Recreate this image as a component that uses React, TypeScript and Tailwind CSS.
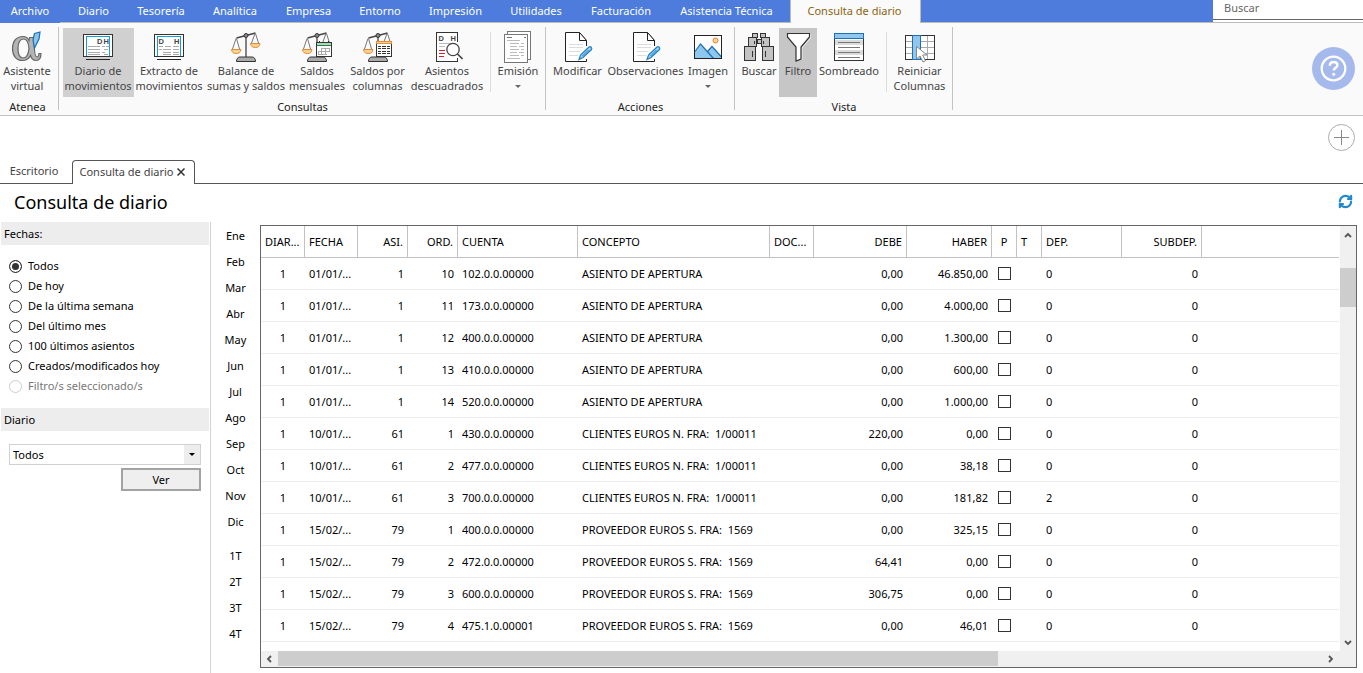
import React from "react";
import { RefreshCw } from "lucide-react";

type IconProps = { children: React.ReactNode };

function Icon({ children }: IconProps) {
  return (
    <svg viewBox="0 0 32 32" className="h-8 w-8 shrink-0" fill="none" aria-hidden="true">
      {children}
    </svg>
  );
}

function AlphaIcon() {
  const bowl =
    "M12 5.500C5 5.500 1.500 10.500 1.500 17.500C1.500 24.500 5 29.500 11.500 29.500C15.500 29.500 18 27.500 19.500 24.500C20.500 28 22.500 29.500 25 29.500C28 29.500 30 27 30 22.500L28 22.500C27.800 25 27 26 26 26C23.500 26 23 18 23 6.500H18.500L18 9.500C16.800 7 15 5.500 12 5.500Z";
  const counter = "M12.500 8C15.500 8 17.500 12 18 17.500C17.500 23 15.500 27 12 27C8.500 27 7 23.500 7 17.500C7 11.500 9 8 12.500 8Z";
  return (
    <Icon>
      <path d={`${bowl} ${counter}`} fill="#b4b4b4" fillRule="evenodd" stroke="#666" strokeWidth="1.200" />
      <path d="M23.500 2.500 L29 1 L28 8 L23.500 17 L22 9 Z" fill="#8cc4ec" stroke="#1c6fb4" strokeWidth="1.200" />
    </Icon>
  );
}

function LedgerIcon({ split }: { split?: boolean }) {
  return (
    <Icon>
      <g shapeRendering="crispEdges">
        <rect x="1.500" y="3.500" width="29" height="22" fill="#fff" stroke="#333" />
        <path d="M4.500 25V5.500h23V25" stroke="#1a9bd7" />
        {split ? (
          <path d="M6 15.500h4M12 15.500h6M20 15.500h6M6 18.500h3M10 18.500h8M20 18.500h6M10 21.500h8M20 21.500h6M10 23.500h8M20 23.500h6" stroke="#aaa" />
        ) : (
          <path d="M6 15.500h12M20 15.500h3M24 15.500h3M6 18.500h12M22 18.500h4M6 21.500h12M20 21.500h3M6 23.500h12M22 23.500h4" stroke="#aaa" />
        )}
        <path d="M4 28.500h24" stroke="#222" />
      </g>
      <text x={split ? 5.5 : 15} y="13" fontSize="7.500" fontWeight="700" fill="#444" fontFamily="Liberation Sans, sans-serif">D</text>
      <text x={split ? 21 : 21.5} y="13" fontSize="7.500" fontWeight="700" fill="#444" fontFamily="Liberation Sans, sans-serif">H</text>
    </Icon>
  );
}

function ScaleIcon({ overlay }: { overlay?: "calendar" | "columns" }) {
  return (
    <Icon>
      <path d="M6.500 7 L25.500 2" stroke="#444" strokeWidth="1.300" />
      <path d="M6 7.500 L2.500 18M6.500 7.500 L9.500 18" stroke="#777" />
      <path d="M25 2.500 L21.500 12M25.500 2.500 L28.500 12" stroke="#777" />
      <path d="M1.500 18.500h9.500c-.5 3-2 4-4.700 4s-4.300-1-4.800-4z" fill="#fbd28b" stroke="#e08a3c" />
      <path d="M16 5v21" stroke="#333" strokeWidth="1.200" />
      <circle cx="16" cy="4.500" r="2" fill="#888" stroke="#333" />
      <path d="M6.500 30.500c0-3 1.500-4.500 3.500-4.500h12c2 0 3.500 1.500 3.500 4.500z" fill="#aaa" stroke="#333" />
      {!overlay && (
        <path d="M20.500 12.500h9.500c-.5 3-2 4-4.700 4s-4.300-1-4.800-4z" fill="#fbd28b" stroke="#e08a3c" />
      )}
      {overlay === "calendar" && (
        <g shapeRendering="crispEdges">
          <rect x="15.500" y="11.500" width="15" height="14" fill="#fff" stroke="#333" />
          <path d="M16 13h14" stroke="#a9dcb5" strokeWidth="2" />
          <path d="M16 14.500h14" stroke="#2d7a4a" />
          <path d="M18.500 10v2M27.500 10v2" stroke="#333" />
          <path d="M20 17.500h9M17 20.500h12M17 23.500h9M17.500 20v4M20.500 17v7M24.500 17v7M28.500 17v4" stroke="#aaa" />
        </g>
      )}
      {overlay === "columns" && (
        <g shapeRendering="crispEdges">
          <rect x="14.500" y="10.500" width="15" height="15" fill="#fff" stroke="#333" />
          <path d="M14 11.500h16" stroke="#e08a3c" strokeWidth="3" />
          <path d="M15 11.500h14" stroke="#fbd28b" />
          <path d="M16 15.500h3M20 15.500h4M25 15.500h3M16 17.500h3M20 17.500h4M25 17.500h3M16 20.500h3M20 20.500h4M25 20.500h3M16 22.500h3M20 22.500h4M25 22.500h3" stroke="#333" />
        </g>
      )}
    </Icon>
  );
}

function UnbalancedIcon() {
  return (
    <Icon>
      <rect x="5.500" y="1.500" width="21" height="29" fill="#fff" />
      <path d="M26.500 11V1.500H5.500v29h21V27" stroke="#333" shapeRendering="crispEdges" />
      <text x="7.500" y="10" fontSize="7.500" fontWeight="700" fill="#444" fontFamily="Liberation Sans, sans-serif">D</text>
      <text x="19.500" y="10" fontSize="7.500" fontWeight="700" fill="#444" fontFamily="Liberation Sans, sans-serif">H</text>
      <path d="M8 12.500h16M8 15.500h6" stroke="#bbb" shapeRendering="crispEdges" />
      <path d="M8 19.500h6M8 22.500h6M8 25.500h5" stroke="#d8202c" shapeRendering="crispEdges" />
      <circle cx="22" cy="18.500" r="6.200" fill="#fff" stroke="#444" strokeWidth="1.300" />
      <path d="M26.500 23l5 5" stroke="#444" strokeWidth="1.600" />
    </Icon>
  );
}

function PagesIcon() {
  return (
    <Icon>
      <g shapeRendering="crispEdges">
        <rect x="5.500" y="0.500" width="23" height="28" fill="#fff" stroke="#777" />
        <rect x="2.500" y="3.500" width="23" height="28" fill="#fff" stroke="#777" />
        <path d="M5 6.500h5M22 6.500h2" stroke="#777" />
        <path d="M5 9.500h13M8 12.500h9M19 12.500h3M8 15.500h7M17 15.500h5M8 18.500h9M19 18.500h3M8 21.500h7M17 21.500h5M8 24.500h9M19 24.500h3M5 27.500h13" stroke="#bbb" />
      </g>
    </Icon>
  );
}

function EditIcon() {
  return (
    <Icon>
      <path d="M3.500 1.500h14l7 8v21h-21z" fill="#fff" />
      <path d="M24.500 15V9.500l-7-8h-14v29h21V28" stroke="#222" />
      <path d="M17.500 1.500v8h7z" fill="#fff" stroke="#222" />
      <path d="M7 13.500h14M7 16.500h14M7 20.500h11M7 24.500h9" stroke="#ddd" shapeRendering="crispEdges" />
      <path d="M17 28.500l1.500-4.500 8.500-8c1.500-1 3.500.800 2.500 2.500l-8.500 8z" fill="#9fd0f3" stroke="#1f80c4" strokeWidth="1.200" />
      <path d="M20.500 25l6-6" stroke="#1f80c4" />
    </Icon>
  );
}

function ImageIcon() {
  return (
    <Icon>
      <rect x="2.500" y="4.500" width="27" height="23" fill="#fff" />
      <path d="M3 20.500l5.500-7.500 7 7.500 4.500-5 9.500 10.500v1.500H3z" fill="#8fc8ef" />
      <path d="M3 20.500l5.500-7.500 13 14.500M15.500 20.500l4.500-5 9.500 10.500" stroke="#1f6fb2" strokeWidth="1.200" />
      <rect x="2.500" y="4.500" width="27" height="23" stroke="#222" shapeRendering="crispEdges" />
      <circle cx="23.500" cy="9.500" r="2.500" fill="#fbd28b" stroke="#e2803a" />
    </Icon>
  );
}

function BinocularsIcon() {
  return (
    <Icon>
      <g shapeRendering="crispEdges" fill="#c3c3c3" stroke="#333">
        <rect x="9.500" y="2.500" width="5" height="4" />
        <rect x="17.500" y="2.500" width="5" height="4" />
        <path d="M14 8.500h4v4h-4z" />
        <rect x="5.500" y="6.500" width="8" height="9" />
        <rect x="18.500" y="6.500" width="8" height="9" />
        <rect x="1.500" y="15.500" width="11" height="14" />
        <rect x="19.500" y="15.500" width="11" height="14" />
        <path d="M11.500 10v3M20.500 10v3M9.500 20v6M22.500 20v6" />
      </g>
    </Icon>
  );
}

function FunnelIcon() {
  return (
    <Icon>
      <path d="M28.500 3v4l-8.500 10v12" stroke="#eee" />
      <path d="M5.500 2.500h22v3.500l-8.500 10v12l-5 2V16L5.500 6z" fill="#fff" stroke="#333" strokeWidth="1.200" />
    </Icon>
  );
}

function ShadingIcon() {
  return (
    <Icon>
      <g shapeRendering="crispEdges">
        <rect x="1.500" y="2.500" width="29" height="27" fill="#fff" stroke="#333" />
        <path d="M2 11.500h28M2 21.500h28" stroke="#dcdcdc" strokeWidth="5" />
        <rect x="1.500" y="2.500" width="29" height="5" fill="#8fc8ef" stroke="#1f6fb2" />
        <path d="M5 11.500h22M5 16.500h22M5 21.500h22M5 26.500h22" stroke="#777" />
      </g>
    </Icon>
  );
}

function ResetColumnsIcon() {
  return (
    <Icon>
      <g shapeRendering="crispEdges">
        <rect x="1.500" y="4.500" width="29" height="24" fill="#fff" />
        <path d="M2 10.500h28M2 16.500h28M2 22.500h28M23.500 5v23" stroke="#aaa" />
        <rect x="1.500" y="4.500" width="29" height="24" stroke="#333" />
        <rect x="8.500" y="4.500" width="8" height="24" fill="#8fc8ef" stroke="#1f6fb2" />
      </g>
      <path d="M12.500 15.500v12.500l3.500-3 3 6 2.500-1.200-2.800-5.800h4.300z" fill="#fff" stroke="#888" />
    </Icon>
  );
}

type Tool = { icon: React.ReactNode; lines: string[]; width: string; tone?: string; menu?: boolean };

function ToolButton({ icon, lines, width, tone = "bg-transparent", menu }: Tool) {
  return (
    <button type="button" className={`flex h-[69px] shrink-0 flex-col items-center pt-[3px] leading-[15px] text-[#444] ${width} ${tone}`}>
      {icon}
      <span className="whitespace-nowrap">{lines[0]}</span>
      {lines[1] && <span className="whitespace-nowrap">{lines[1]}</span>}
      {menu && (
        <svg viewBox="0 0 6 3" className="mt-[7px] h-[3px] w-1.5" aria-hidden="true">
          <path d="M0 0h6L3 3z" fill="#666" />
        </svg>
      )}
    </button>
  );
}

function Group({ label, width, children }: { label: string; width: string; children: React.ReactNode }) {
  return (
    <section className={`flex h-[83px] shrink-0 flex-col border-r border-[#c3c3c3] ${width}`}>
      <div className="flex pt-px">{children}</div>
      <h2 className="mt-px pr-[3px] text-center leading-[17px] text-[#222]">{label}</h2>
    </section>
  );
}

const Separator = () => <div className="mx-1 mt-1 h-[60px] w-px bg-[#dcdcdc]" />;

const menus: [string, string][] = [
  ["Archivo", "w-[60px] border-[#4d7cdc]"],
  ["Diario", "w-[67px] border-[#bbb]"],
  ["Tesorería", "w-[68px] border-[#bbb]"],
  ["Analítica", "w-[80px] border-[#bbb]"],
  ["Empresa", "w-[67px] border-[#bbb]"],
  ["Entorno", "w-[76px] border-[#bbb]"],
  ["Impresión", "w-[75px] border-[#bbb]"],
  ["Utilidades", "w-[86px] border-[#bbb]"],
  ["Facturación", "w-[84px] border-[#bbb]"],
  ["Asistencia Técnica", "w-[127px] border-[#bbb]"],
];

const ranges = ["Todos", "De hoy", "De la última semana", "Del último mes", "100 últimos asientos", "Creados/modificados hoy", "Filtro/s seleccionado/s"];
const months = ["Ene", "Feb", "Mar", "Abr", "May", "Jun", "Jul", "Ago", "Sep", "Oct", "Nov", "Dic"];
const quarters = ["1T", "2T", "3T", "4T"];

const columns: [string, string, string][] = [
  ["DIAR...", "w-[44px]", "text-left"],
  ["FECHA", "w-[53px]", "text-left"],
  ["ASI.", "w-[50px]", "text-right"],
  ["ORD.", "w-[50px]", "text-right"],
  ["CUENTA", "w-[120px]", "text-left"],
  ["CONCEPTO", "w-[192px]", "text-left"],
  ["DOC...", "w-[44px]", "text-left"],
  ["DEBE", "w-[93px]", "text-right"],
  ["HABER", "w-[85px]", "text-right"],
  ["P", "w-[25px]", "text-center"],
  ["T", "w-[25px]", "text-left"],
  ["DEP.", "w-[80px]", "text-left"],
  ["SUBDEP.", "w-[80px]", "text-right"],
];

type Entry = [string, number, number, string, string, string, string, number];
const entries: Entry[] = [
  ["01/01/...", 1, 10, "102.0.0.00000", "ASIENTO DE APERTURA", "0,00", "46.850,00", 0],
  ["01/01/...", 1, 11, "173.0.0.00000", "ASIENTO DE APERTURA", "0,00", "4.000,00", 0],
  ["01/01/...", 1, 12, "400.0.0.00000", "ASIENTO DE APERTURA", "0,00", "1.300,00", 0],
  ["01/01/...", 1, 13, "410.0.0.00000", "ASIENTO DE APERTURA", "0,00", "600,00", 0],
  ["01/01/...", 1, 14, "520.0.0.00000", "ASIENTO DE APERTURA", "0,00", "1.000,00", 0],
  ["10/01/...", 61, 1, "430.0.0.00000", "CLIENTES EUROS N. FRA:  1/00011", "220,00", "0,00", 0],
  ["10/01/...", 61, 2, "477.0.0.00000", "CLIENTES EUROS N. FRA:  1/00011", "0,00", "38,18", 0],
  ["10/01/...", 61, 3, "700.0.0.00000", "CLIENTES EUROS N. FRA:  1/00011", "0,00", "181,82", 2],
  ["15/02/...", 79, 1, "400.0.0.00000", "PROVEEDOR EUROS S. FRA:  1569", "0,00", "325,15", 0],
  ["15/02/...", 79, 2, "472.0.0.00000", "PROVEEDOR EUROS S. FRA:  1569", "64,41", "0,00", 0],
  ["15/02/...", 79, 3, "600.0.0.00000", "PROVEEDOR EUROS S. FRA:  1569", "306,75", "0,00", 0],
  ["15/02/...", 79, 4, "475.1.0.00001", "PROVEEDOR EUROS S. FRA:  1569", "0,00", "46,01", 0],
];

function Arrow({ d, label, className }: { d: string; label: string; className: string }) {
  return (
    <button type="button" aria-label={label} className={`flex shrink-0 items-center justify-center ${className}`}>
      <svg viewBox="0 0 8 8" className="h-2 w-2" fill="none" aria-hidden="true">
        <path d={d} stroke="#555" strokeWidth="1.800" />
      </svg>
    </button>
  );
}

function JournalTable() {
  return (
    <table className="w-full table-fixed border-separate border-spacing-0 whitespace-pre text-black">
      <thead>
        <tr className="h-8">
          {columns.map(([name, width, align]) => (
            <th key={name} scope="col" className={`border-r border-b border-[#c3c3c3] px-1 font-normal ${width} ${align}`}>
              {name}
            </th>
          ))}
          <td className="border-b border-[#c3c3c3]" />
        </tr>
      </thead>
      <tbody className="[&_td]:border-b [&_td]:border-[#ededed] [&_td]:px-1">
        {entries.map(([date, entry, order, account, concept, debit, credit, dep]) => (
          <tr key={`${entry}-${order}`} className="h-8">
            <td className="text-center">1</td>
            <td>{date}</td>
            <td className="text-right">{entry}</td>
            <td className="text-right">{order}</td>
            <td>{account}</td>
            <td>{concept}</td>
            <td />
            <td className="text-right">{debit}</td>
            <td className="text-right">{credit}</td>
            <td>
              <input type="checkbox" aria-label={`P ${entry}-${order}`} className="mx-auto block h-[13px] w-[13px] appearance-none border border-[#333] bg-white" />
            </td>
            <td />
            <td>{dep}</td>
            <td className="text-right">0</td>
            <td />
          </tr>
        ))}
      </tbody>
    </table>
  );
}

export default function App() {
  return (
    <div className="flex min-h-screen flex-col bg-white font-['Noto_Sans','Open_Sans',sans-serif] text-[11px] leading-4 text-black">
      <header className="flex h-[23px]">
        <nav className="flex min-w-0 flex-1 text-white">
          {menus.map(([name, style]) => (
            <button key={name} type="button" className={`shrink-0 border-b bg-[#4d7cdc] whitespace-nowrap ${style}`}>
              {name}
            </button>
          ))}
          <button type="button" className="w-[131px] shrink-0 border-x border-[#bbb] bg-[#fafafa] pr-0.5 pb-0.5 whitespace-nowrap text-[#8a6410]">
            Consulta de diario
          </button>
          <div className="flex-1 border-b border-[#bbb] bg-[#4d7cdc]" />
        </nav>
        <div className="w-[150px] border-b border-[#bbb]">
          <input type="text" aria-label="Buscar" placeholder="Buscar" className="block h-5 w-full border-b border-[#666] px-[11px] pb-1 outline-none placeholder:text-[#666]" />
        </div>
      </header>

      <div className="flex h-[93px] items-start border-b border-[#c3c3c3] bg-[#fafafa] pt-1">
        <Group label="Atenea" width="w-[59px]">
          <ToolButton icon={<AlphaIcon />} lines={["Asistente", "virtual"]} width="w-[54px]" />
        </Group>
        <Group label="Consultas" width="w-[487px] pl-1">
          <ToolButton icon={<LedgerIcon />} lines={["Diario de", "movimientos"]} width="w-[71px] pr-px" tone="bg-[#d0d0d0]" />
          <ToolButton icon={<LedgerIcon split />} lines={["Extracto de", "movimientos"]} width="w-[71px] pr-px" />
          <ToolButton icon={<ScaleIcon />} lines={["Balance de", "sumas y saldos"]} width="w-[82px]" />
          <ToolButton icon={<ScaleIcon overlay="calendar" />} lines={["Saldos", "mensuales"]} width="w-[60px]" />
          <ToolButton icon={<ScaleIcon overlay="columns" />} lines={["Saldos por", "columnas"]} width="w-[61px]" />
          <ToolButton icon={<UnbalancedIcon />} lines={["Asientos", "descuadrados"]} width="w-[78px]" />
          <Separator />
          <ToolButton icon={<PagesIcon />} lines={["Emisión"]} width="w-[46px]" menu />
        </Group>
        <Group label="Acciones" width="w-[189px] pl-1">
          <ToolButton icon={<EditIcon />} lines={["Modificar"]} width="w-[55px]" />
          <ToolButton icon={<EditIcon />} lines={["Observaciones"]} width="w-[81px]" />
          <ToolButton icon={<ImageIcon />} lines={["Imagen"]} width="w-[44px]" menu />
        </Group>
        <Group label="Vista" width="w-[218px] pl-1">
          <ToolButton icon={<BinocularsIcon />} lines={["Buscar"]} width="w-[40px]" />
          <ToolButton icon={<FunnelIcon />} lines={["Filtro"]} width="w-[38px]" tone="bg-[#c6c6c6]" />
          <ToolButton icon={<ShadingIcon />} lines={["Sombreado"]} width="w-[65px] pr-px" />
          <Separator />
          <ToolButton icon={<ResetColumnsIcon />} lines={["Reiniciar", "Columnas"]} width="w-[58px] pr-px" />
        </Group>
        <button type="button" aria-label="Ayuda" className="mt-5 mr-2 ml-auto shrink-0">
          <svg viewBox="0 0 43 43" className="h-[43px] w-[43px]" fill="none" aria-hidden="true">
            <circle cx="21.500" cy="21.500" r="21.500" fill="#a5b9ec" />
            <circle cx="21.500" cy="21.500" r="11.800" stroke="#fff" strokeWidth="2.300" />
            <path d="M17.800 18.700c0-2.300 1.600-3.700 3.800-3.700s3.800 1.300 3.800 3.300c0 2.500-3.700 2.600-3.700 5.300" stroke="#fff" strokeWidth="2.400" />
            <circle cx="21.700" cy="27.200" r="1.500" fill="#fff" />
          </svg>
        </button>
      </div>

      <div className="flex justify-end pt-2 pr-2">
        <button type="button" aria-label="Añadir">
          <svg viewBox="0 0 27 27" className="h-[27px] w-[27px]" fill="none" stroke="#aaa" aria-hidden="true">
            <circle cx="13.500" cy="13.500" r="13" />
            <path d="M6 13.500h15M13.500 6v15" stroke="#888" />
          </svg>
        </button>
      </div>

      <div className="mt-[9px] flex h-6 shrink-0 items-stretch text-[#444]">
        <button type="button" className="w-[72px] border-b border-[#555] pr-1 pb-px">Escritorio</button>
        <div className="flex w-[123px] items-center justify-center gap-1 rounded-t border border-b-0 border-[#555] pr-0.5 pb-0.5">
          <span className="whitespace-nowrap">Consulta de diario</span>
          <button type="button" aria-label="Cerrar">
            <svg viewBox="0 0 8 8" className="h-2 w-2" fill="none" aria-hidden="true">
              <path d="M.5.5l7 7M7.500.5l-7 7" stroke="#333" strokeWidth="1.500" />
            </svg>
          </button>
        </div>
        <div className="flex-1 border-b border-[#555]" />
      </div>

      <div className="flex h-[38px] items-center justify-between pr-2.5 pb-[3px] pl-3.5">
        <h1 className="text-[18px] leading-6">Consulta de diario</h1>
        <button type="button" aria-label="Actualizar">
          <RefreshCw className="h-[15px] w-[15px] text-[#2188c9]" strokeWidth={3.5} />
        </button>
      </div>

      <main className="flex flex-1 items-stretch">
        <aside className="w-[211px] shrink-0 border-r border-[#d3d3d3] pr-px pl-px">
          <fieldset>
            <legend className="block w-full bg-[#ededed] px-[3px] leading-[23px]">Fechas:</legend>
            <div className="mt-[11px] flex flex-col px-2">
              {ranges.map((name, i) => {
                const disabled = i === ranges.length - 1;
                return (
                  <label key={name} className="flex h-5 items-center gap-1.5 text-black has-disabled:text-[#777]">
                    <input
                      type="radio"
                      name="fechas"
                      defaultChecked={i === 0}
                      disabled={disabled}
                      className="h-[13px] w-[13px] appearance-none rounded-full border border-[#333] bg-white checked:bg-[#333] checked:shadow-[inset_0_0_0_2px_white] disabled:border-[#ccc]"
                    />
                    {name}
                  </label>
                );
              })}
            </div>
          </fieldset>
          <label htmlFor="diario" className="mt-3 block bg-[#ededed] px-[3px] leading-[23px]">Diario</label>
          <div className="mt-[13px] flex flex-col items-end px-2">
            <div className="relative w-full border border-[#d0d0d0]">
              <select id="diario" className="block h-[19px] w-full appearance-none bg-white px-[3px]">
                <option>Todos</option>
              </select>
              <span className="pointer-events-none absolute inset-y-0 right-0 flex w-4 items-center justify-center bg-[#ededed]">
                <svg viewBox="0 0 6 3" className="h-[3px] w-1.5" aria-hidden="true">
                  <path d="M0 0h6L3 3z" fill="#000" />
                </svg>
              </span>
            </div>
            <button type="button" className="mt-[3px] h-[23px] w-20 border-2 border-[#a3a3a3] bg-[#efefef]">Ver</button>
          </div>
        </aside>

        <div className="flex w-[49px] shrink-0 flex-col gap-2 pt-px">
          {[months, quarters].map((list, i) => (
            <div key={i} className="flex flex-col">
              {list.map((name) => (
                <button key={name} type="button" className="h-[26px] text-center">{name}</button>
              ))}
            </div>
          ))}
        </div>

        <section aria-label="Movimientos" className="mt-[3px] mr-1.5 mb-[5px] flex min-w-0 flex-1 flex-col border border-[#666]">
          <div className="flex flex-1">
            <div className="min-w-0 flex-1 overflow-hidden pr-px">
              <JournalTable />
            </div>
            <div className="flex w-4 shrink-0 flex-col bg-[#f0f0f0]">
              <Arrow d="M1 6l3-3 3 3" label="Subir" className="h-[17px]" />
              <div className="flex-1 pt-[25px]">
                <div className="h-[39px] bg-[#cdcdcd]" />
              </div>
              <Arrow d="M1 2l3 3 3-3" label="Bajar" className="h-[17px]" />
            </div>
          </div>
          <div className="flex h-4 shrink-0 bg-[#f0f0f0] pr-[17px]">
            <Arrow d="M5 1L2 4l3 3" label="Izquierda" className="w-[17px]" />
            <div className="flex-1">
              <div className="h-[15px] w-[69%] bg-[#cdcdcd]" />
            </div>
            <Arrow d="M2 1l3 3-3 3" label="Derecha" className="w-[17px]" />
          </div>
        </section>
      </main>
    </div>
  );
}
